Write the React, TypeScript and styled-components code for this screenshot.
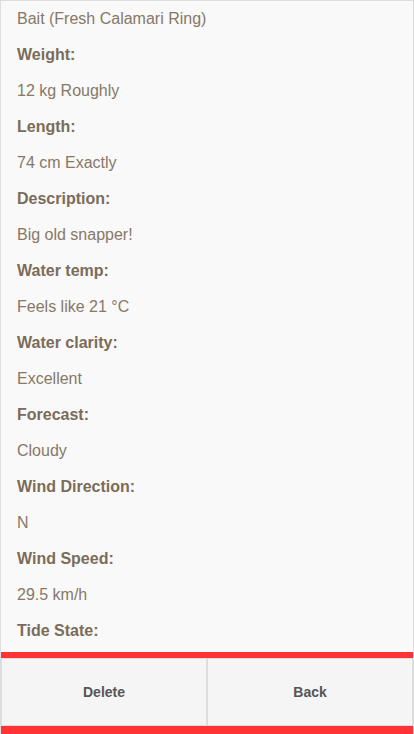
import styled, { createGlobalStyle } from "styled-components";

const GlobalStyle = createGlobalStyle`
html, body {
  margin: 0;
  padding: 0;
  background: #f9f9f9;
  font-family: "Liberation Sans", Arial, sans-serif;
}
`;

const Page = styled.div`
height: 734px;
box-sizing: border-box;
border: 1px solid #dddddd;
border-bottom: none;
background-color: #f9f9f9;
display: flex;
flex-direction: column;
overflow: hidden;
`;

const Details = styled.div`
flex: 1;
overflow: hidden;
padding: 0 16px;
`;

const Line = styled.div<{ $label?: boolean }>`
height: 36px;
display: flex;
align-items: center;
font-size: 16px;
font-weight: ${(p) => (p.$label ? "bold" : "normal")};
color: ${(p) => (p.$label ? "#7b6c59" : "#877866")};
`;

const Footer = styled.div`
border-top: 6px solid #ff3333;
border-bottom: 8px solid #ff3333;
display: flex;
`;

const Button = styled.button`
flex: 1;
height: 68px;
background-color: #f5f5f5;
border: 1px solid #dddddd;
margin: 0;
font-family: "Liberation Sans", Arial, sans-serif;
font-size: 14px;
font-weight: bold;
color: #555555;
`;

const rows: [string, string | null][] = [
  ["Weight:", "12 kg Roughly"],
  ["Length:", "74 cm Exactly"],
  ["Description:", "Big old snapper!"],
  ["Water temp:", "Feels like 21 °C"],
  ["Water clarity:", "Excellent"],
  ["Forecast:", "Cloudy"],
  ["Wind Direction:", "N"],
  ["Wind Speed:", "29.5 km/h"],
  ["Tide State:", null],
];

export default function App() {
  return (
    <>
      <GlobalStyle />
      <Page>
        <Details>
          <Line>Bait (Fresh Calamari Ring)</Line>
          {rows.map(([label, value]) => (
            <div key={label}>
              <Line $label>{label}</Line>
              {value && <Line>{value}</Line>}
            </div>
          ))}
        </Details>
        <Footer>
          <Button>Delete</Button>
          <Button>Back</Button>
        </Footer>
      </Page>
    </>
  );
}
